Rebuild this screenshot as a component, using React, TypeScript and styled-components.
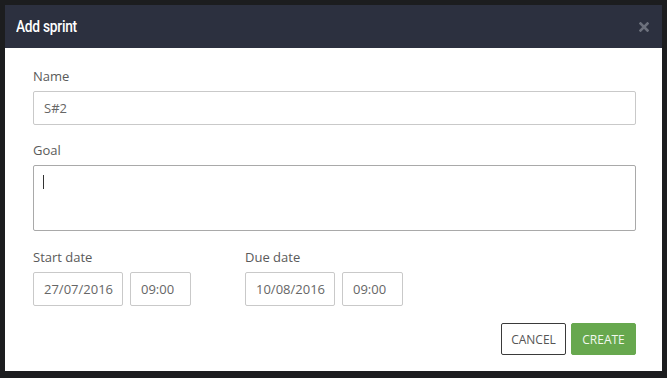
import styled, { createGlobalStyle } from "styled-components";

const GlobalStyle = createGlobalStyle`
    html, body {
        margin: 0;
        padding: 0;
        background: #1c1d1f;
    }
    * {
        box-sizing: border-box;
    }
`;

const Backdrop = styled.div`
    width: 667px;
    height: 378px;
    padding: 5px 5px 8px 5px;
    background: #1c1d1f;
`;
const Modal = styled.div`
    width: 657px;
    background: #fff;
    display: flex;
    flex-direction: column;
`;
const Header = styled.header`
    height: 43px;
    background: #2c303f;
    display: flex;
    align-items: center;
    justify-content: space-between;
    padding: 0 12px 0 11px;
`;
const Title = styled.h1`
    margin: 0;
    font-family: Roboto, "Liberation Sans", sans-serif;
    font-weight: 500;
    font-size: 16px;
    letter-spacing: -0.3px;
    color: #fff;
    transform: scaleX(0.86);
    transform-origin: left center;
`;
const Close = styled.button`
    border: none;
    background: none;
    padding: 0;
    width: 12px;
    height: 12px;
    display: flex;
    align-items: center;
    justify-content: center;
    cursor: pointer;
`;
const Body = styled.div`
    padding: 19px 26px 16px 28px;
    display: flex;
    flex-direction: column;
    font-family: "Open Sans", "Liberation Sans", sans-serif;
`;
const Field = styled.div<{ $last?: boolean }>`
    display: flex;
    flex-direction: column;
    margin-bottom: ${(p) => (p.$last ? "0" : "16px")};
`;
const Label = styled.label`
    font-size: 13px;
    line-height: 18px;
    color: #5a5a5a;
    margin-bottom: 6px;
`;
const Input = styled.input<{ $w?: number }>`
    width: ${(p) => (p.$w ? `${p.$w}px` : "100%")};
    height: 34px;
    border: 1px solid #c9c9c9;
    border-radius: 2px;
    padding: 0 0 0 10px;
    font-family: "Open Sans", "Liberation Sans", sans-serif;
    font-size: 13px;
    color: #666;
    outline: none;
`;
const TextArea = styled.textarea`
    width: 100%;
    height: 66px;
    border: 1px solid #a9a9a9;
    border-radius: 2px;
    resize: none;
    padding: 8px 10px;
    font-family: "Open Sans", "Liberation Sans", sans-serif;
    font-size: 13px;
    outline: none;
`;
const Caret = styled.span`
    position: absolute;
    left: 10px;
    top: 10px;
    width: 1px;
    height: 14px;
    background: #333;
`;
const GoalBox = styled.div`
    position: relative;
    display: flex;
`;
const DateRow = styled.div`
    display: flex;
    gap: 54px;
    margin: 1px 0 17px;
`;
const DateInputs = styled.div`
    display: flex;
    gap: 7px;
`;
const Actions = styled.div`
    display: flex;
    justify-content: flex-end;
    gap: 5px;
`;
const Button = styled.button<{ $primary?: boolean }>`
    width: 65px;
    height: 32px;
    border-radius: 2px;
    font-family: "Open Sans", "Liberation Sans", sans-serif;
    font-size: 12px;
    text-transform: uppercase;
    padding: 0;
    cursor: pointer;
    border: 1px solid ${(p) => (p.$primary ? "#67a84e" : "#3a3a3a")};
    background: ${(p) => (p.$primary ? "#67a84e" : "#fff")};
    color: ${(p) => (p.$primary ? "#f2f8ee" : "#555")};
`;

function DateField({ label, date }: { label: string; date: string }) {
    return (
        <Field $last>
            <Label>{label}</Label>
            <DateInputs>
                <Input $w={90} defaultValue={date} />
                <Input $w={61} defaultValue="09:00" />
            </DateInputs>
        </Field>
    );
}

export default function App() {
    return (
        <>
            <GlobalStyle />
            <Backdrop>
                <Modal>
                    <Header>
                        <Title>Add sprint</Title>
                        <Close aria-label="close">
                            <svg width="10" height="10" viewBox="0 0 10 10">
                                <path d="M1.5 1.5 L8.5 8.5 M8.5 1.5 L1.5 8.5" stroke="#6c707c" strokeWidth="2.6" strokeLinecap="square" />
                            </svg>
                        </Close>
                    </Header>
                    <Body>
                        <Field>
                            <Label>Name</Label>
                            <Input defaultValue="S#2" />
                        </Field>
                        <Field>
                            <Label>Goal</Label>
                            <GoalBox>
                                <TextArea />
                                <Caret />
                            </GoalBox>
                        </Field>
                        <DateRow>
                            <DateField label="Start date" date="27/07/2016" />
                            <DateField label="Due date" date="10/08/2016" />
                        </DateRow>
                        <Actions>
                            <Button>Cancel</Button>
                            <Button $primary>Create</Button>
                        </Actions>
                    </Body>
                </Modal>
            </Backdrop>
        </>
    );
}
